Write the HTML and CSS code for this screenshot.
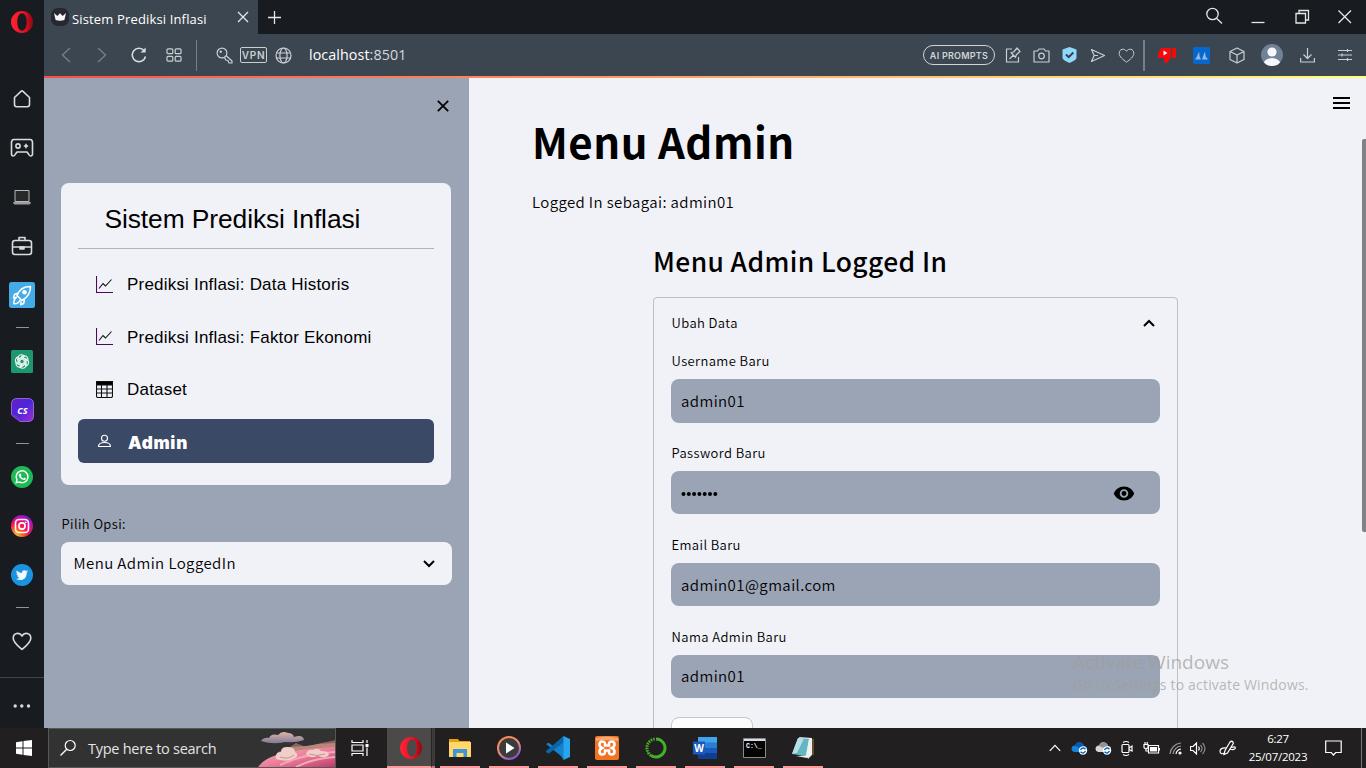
FILE: index.html
```html
<!DOCTYPE html>
<html lang="id">
<head>
<meta charset="utf-8">
<title>Sistem Prediksi Inflasi</title>
<link rel="stylesheet" href="styles.css">
</head>
<body>
<div class="screen">
  <nav class="rail">
    <div class="slot opera"><svg width="22" height="22" viewBox="0 0 22 22"><defs><linearGradient id="op" x1="0" x2="1"><stop offset="0" stop-color="#ff2434"/><stop offset=".55" stop-color="#f01225"/><stop offset="1" stop-color="#8e0714"/></linearGradient></defs><path fill="url(#op)" fill-rule="evenodd" d="M11 0a11 11 0 1 0 0 22a11 11 0 1 0 0-22zM11 2.3c2.900 0 4.700 3.700 4.700 8.700s-1.800 8.700-4.700 8.700s-4.700-3.700-4.700-8.700s1.800-8.700 4.700-8.700z"/></svg></div>
    <div class="slot"><svg class="ln" width="18" height="18" viewBox="0 0 18 18"><path d="M1.500 7.500L8 1.300q1-.8 2 0l6.500 6.200v7q0 2.200-2.200 2.200H3.700q-2.200 0-2.200-2.200z"/></svg></div>
    <div class="slot"><svg class="ln" width="24" height="20" viewBox="0 0 24 20"><path d="M4 1.500h16q2.500 0 2.500 3V16q0 2-2 2-1 0-2-2l-1.500-2H7l-1.500 2q-1 2-2 2-2 0-2-2V4.500q0-3 2.500-3z"/><circle cx="8" cy="8" r="2.100"/><path d="M16 5.800v4.400M13.800 8h4.400"/></svg></div>
    <div class="slot laptop"><svg width="18" height="15" viewBox="0 0 18 15"><path d="M2 .5h14v11H2z" fill="#292929" stroke="#b8b8b8"/><path d="M0 12h18l-1 2.500H1z" fill="#9d9d9d"/></svg></div>
    <div class="slot"><svg class="ln" width="22" height="20" viewBox="0 0 22 20"><rect x="1.500" y="4.500" width="19" height="14" rx="2.500"/><path d="M8 4V1.500h6V4M1.500 11h19"/><path d="M9 11h4v2H9z" fill="#d9dcde"/></svg></div>
    <div class="slot"><svg width="26" height="26" viewBox="0 0 26 26"><rect width="26" height="26" rx="2.500" fill="#45abe6"/><g fill="none" stroke="#fff" stroke-width="1.500" stroke-linejoin="round"><path d="M8 13.500C10 8 14 4.500 21.500 4.500c0 7-3 11-8.500 14zM9 11l-3.500 1.500L4.500 16l3-.7M15.500 17.500l-.8 4-3 1.300.5-3.500M8 15q-3.500 2-3.200 6.800Q9.500 22 11.200 18"/></g><circle cx="15.500" cy="10.300" r="2.300" fill="#fff"/></svg></div>
    <div class="dash"></div>
    <div class="slot tall"><svg width="22" height="23" viewBox="0 0 22 23"><rect width="22" height="23" rx="1.500" fill="#1d9770"/><g fill="none" stroke="#e8f5f0" stroke-width="1.150"><g id="petal"><path d="M7 14.500V8.300Q7.200 5 10.300 4.800Q12 4.800 13.200 6L8.800 8.500v5.200"/></g><use href="#petal" transform="rotate(60 11 11.500)"/><use href="#petal" transform="rotate(120 11 11.500)"/><use href="#petal" transform="rotate(180 11 11.500)"/><use href="#petal" transform="rotate(240 11 11.500)"/><use href="#petal" transform="rotate(300 11 11.500)"/></g></svg></div>
    <div class="slot up"><svg width="23" height="24" viewBox="0 0 23 24"><defs><linearGradient id="cs" x1="0" y1="0" x2="1" y2="1"><stop offset="0" stop-color="#6b1cc9"/><stop offset=".5" stop-color="#4b26d8"/><stop offset="1" stop-color="#a62bd6"/></linearGradient></defs><path d="M6 .5h11q5.500 0 5.500 5.500v12q0 5.500-5.500 5.500H9L.5 17V6Q.5.500 6 .5z" fill="url(#cs)" stroke="#8c65cf"/><path d="M.8 17Q7 15.500 8.500 23z" fill="#7b2bdc"/><text x="11.500" y="15.600" text-anchor="middle" class="cstext">CS</text></svg></div>
    <div class="dash"></div>
    <div class="slot tall"><svg width="22" height="22" viewBox="0 0 22 22"><circle cx="11" cy="11" r="11" fill="#1fb955"/><path d="M5.200 16.800l.8-3a5.900 5.900 0 1 1 2.200 2.100z" fill="none" stroke="#fff" stroke-width="1.400"/><path d="M8.600 7.800q1-.8 1.500.6l.3.900-.6.900q1 1.700 2.700 2.200l.8-.8 1.600.8q-.3 2-2.200 1.600-4.200-.9-5-4.700-.1-.900.900-1.500z" fill="#fff"/></svg></div>
    <div class="slot up"><svg width="22" height="22" viewBox="0 0 22 22"><defs><radialGradient id="ig" cx=".2" cy="1" r="1.100"><stop offset="0" stop-color="#ffd43b"/><stop offset=".3" stop-color="#fb6a23"/><stop offset=".55" stop-color="#f3145b"/><stop offset=".85" stop-color="#c20db0"/><stop offset="1" stop-color="#5f22d6"/></radialGradient></defs><circle cx="11" cy="11" r="11" fill="url(#ig)"/><g fill="none" stroke="#fff" stroke-width="1.600"><rect x="4.500" y="4.500" width="13" height="13" rx="3.500"/><circle cx="11" cy="11" r="3.100"/></g><circle cx="14.700" cy="7.300" r=".9" fill="#fff"/></svg></div>
    <div class="slot short"><svg width="22" height="22" viewBox="0 0 22 22"><circle cx="11" cy="11" r="11" fill="#1c93e0"/><path fill="#f3f8fb" d="M17 7.200q-.7.300-1.400.4.800-.5 1.100-1.300-.8.400-1.600.6A2.500 2.500 0 0 0 10.900 9Q7.700 8.900 5.700 6.500q-1 2 .8 3.400-.6 0-1.100-.3 0 1.900 2 2.500-.6.100-1.100 0 .5 1.600 2.300 1.700Q7.100 15.100 5 14.900 8 16.700 11.500 15.700q4.300-1.500 4.200-7.200.8-.6 1.300-1.300z"/></svg></div>
    <div class="dash"></div>
    <div class="slot tall"><svg class="ln" width="20" height="19" viewBox="0 0 20 19"><path d="M10 17.500C6 14 1.200 10.500 1.200 6.300 1.200 1 7.500-.3 10 4c2.500-4.300 8.800-3 8.800 2.300C18.800 10.500 14 14 10 17.500z"/></svg></div>
    <div class="more"><svg width="18" height="4" viewBox="0 0 18 4" fill="#d9dcde"><circle cx="2.200" cy="2" r="1.700"/><circle cx="8.800" cy="2" r="1.700"/><circle cx="15.500" cy="2" r="1.700"/></svg></div>
  </nav>

  <div class="window">
    <header class="tabs">
      <div class="tab">
        <svg width="18" height="18" viewBox="0 0 18 18"><rect width="18" height="18" rx="7" fill="#262730"/><path d="M3 5l3.300 3L9 5.200 11.700 8 15 5l-1.600 7q-4.400 1.500-8.800 0z" fill="#f5f5f5"/></svg>
        <span class="tab-title">Sistem Prediksi Inflasi</span>
        <svg class="tab-x" width="12" height="12" viewBox="0 0 12 12"><path d="M1 1l10 10M11 1L1 11"/></svg>
      </div>
      <svg class="plus" width="13" height="13" viewBox="0 0 13 13"><path d="M6.500 0v13M0 6.500h13"/></svg>
      <div class="winctl">
        <svg width="44" height="20" viewBox="0 0 44 20"><circle cx="20.500" cy="8" r="5.700"/><path d="M24.500 12.200L30 17.500"/></svg>
        <svg width="44" height="20" viewBox="0 0 44 20"><path d="M15.500 16.500h13"/></svg>
        <svg width="44" height="20" viewBox="0 0 44 20"><path d="M16 7.500h9.500V17H16zM19 7V4.500h9.500V14h-3"/></svg>
        <svg width="42" height="20" viewBox="0 0 42 20"><path d="M14.500 4.500L27 17M27 4.500L14.500 17"/></svg>
      </div>
    </header>
    <div class="toolbar">
      <div class="c nav-b"><svg class="dim" width="10" height="16" viewBox="0 0 10 16"><path d="M9 1L1.500 8 9 15"/></svg></div>
      <div class="c nav-b"><svg class="dim" width="10" height="16" viewBox="0 0 10 16"><path d="M1 1l7.500 7L1 15"/></svg></div>
      <div class="c nav-b reload"><svg class="ln" width="16" height="16" viewBox="0 0 16 16"><path d="M14.500 9.500a6.700 6.700 0 1 1-1.300-5.800"/><path d="M14.700.5v5H9.500z" fill="#d9dcde" stroke="none"/></svg></div>
      <div class="c nav-b"><svg class="ln thin" width="16" height="14" viewBox="0 0 16 14"><rect x="1" y=".8" width="5.800" height="4.900" rx="1"/><rect x="9.200" y=".8" width="5.800" height="4.900" rx="1"/><rect x="1" y="8.300" width="5.800" height="4.900" rx="1"/><rect x="9.200" y="8.300" width="5.800" height="4.900" rx="1"/></svg></div>
      <div class="sep"></div>
      <div class="c key"><svg class="ln thin" width="17" height="17" viewBox="0 0 17 17"><circle cx="6" cy="6" r="4.900"/><circle cx="4.700" cy="4.700" r=".6"/><path d="M10 8.500l6 5.500v2h-3l-1-2.500-2.300-.5-1-2.300"/></svg></div>
      <div class="vpn">VPN</div>
      <div class="c globe"><svg class="ln thin" width="17" height="17" viewBox="0 0 17 17"><circle cx="8.500" cy="8.500" r="7.500"/><ellipse cx="8.500" cy="8.500" rx="3.600" ry="7.500"/><path d="M1.500 6h14M1.500 11h14"/></svg></div>
      <div class="url">localhost<span>:8501</span></div>
      <div class="tools">
        <div class="prompts">AI PROMPTS</div>
        <div class="c w36"><svg class="ln thin" width="16" height="16" viewBox="0 0 16 16"><path d="M7 2H1.500v13h12V10M4.500 12l4-4M6 5.500l4.500 4.800.8-2.600L15 4.500 12 1 8.700 5z"/></svg></div>
        <div class="c w28"><svg class="ln thin" width="17" height="15" viewBox="0 0 17 15"><path d="M1 3h3.500L6 1h5l1.500 2H16v11H1z"/><circle cx="8.500" cy="8" r="2.800"/></svg></div>
        <div class="c w28"><svg width="15" height="16" viewBox="0 0 15 16"><path d="M7.500 0L14.500 2.500V11q0 2-7 5-7-3-7-5V2.500z" fill="#8fd8fb"/><path d="M4 7.500l2.700 2.700L11.300 5.500" fill="none" stroke="#34424e" stroke-width="2"/></svg></div>
        <div class="c w29"><svg class="ln thin" width="16" height="15" viewBox="0 0 16 15"><path d="M1.500 1.500l13 6-13 6 2.700-6zM4.200 7.500H8"/></svg></div>
        <div class="c w28"><svg class="ln thin" width="17" height="15" viewBox="0 0 20 18"><path d="M10 17C6 14 1.200 10.500 1.200 6.300 1.200 1 7.500-.3 10 4c2.500-4.300 8.800-3 8.800 2.300C18.800 10.500 14 14 10 17z"/></svg></div>
        <div class="sep wide"></div>
        <div class="c w43"><svg width="18" height="17" viewBox="0 0 18 17" fill="#f80808"><path d="M3 1h10v9l-4 6-3-.8.500-4.200H0V7z"/><path d="M14.200 1H18v10h-3.800z"/><path d="M5.500 3.500v5l4-2.500z" fill="#fff"/></svg></div>
        <div class="c w35"><svg width="17" height="17" viewBox="0 0 17 17"><rect width="17" height="17" rx="1.500" fill="#0668cc"/><path d="M2 12.500l2-3 2-5 .7 5 1.300 3zM9 12.500l1-3 2-5 .7 5 2.300 3z" fill="#94b7e6"/></svg></div>
        <div class="c w35"><svg class="ln thin" width="16" height="17" viewBox="0 0 16 17"><path d="M8 1l7 3.500v8L8 16l-7-3.500v-8zM1 4.500L8 8l7-3.500M8 8v8"/></svg></div>
        <div class="c w35"><svg width="22" height="22" viewBox="0 0 22 22"><clipPath id="av"><circle cx="11" cy="11" r="11"/></clipPath><g clip-path="url(#av)"><path d="M0 0h22v22H0z" fill="#718196"/><circle cx="11" cy="8" r="4.600" fill="#f3f6fa"/><ellipse cx="11" cy="20" rx="8.500" ry="6" fill="#f3f6fa"/></g></svg></div>
        <div class="c w37"><svg class="ln thin" width="15" height="15" viewBox="0 0 15 15"><path d="M7.500 0v10M3.500 6.500l4 4 4-4M.6 10v4h13.800v-4"/></svg></div>
        <div class="c w37"><svg class="ln thin" width="14" height="12" viewBox="0 0 14 12"><path d="M0 1.500h14M0 6h14M0 10.500h14M9.500 0v3M4 4.500v3M9.500 9v3"/></svg></div>
      </div>
    </div>
    <div class="accent"></div>

    <div class="page">
      <aside class="side">
        <svg class="side-x" width="12" height="12" viewBox="0 0 12 12"><path d="M.8.8l10.400 10.400M11.200.8L.8 11.200"/></svg>
        <div class="card">
          <div class="brand">Sistem Prediksi Inflasi</div>
          <div class="item"><svg width="17" height="17" viewBox="0 0 17 17"><path d="M.5 0v16.500H17" stroke="#4b0a56"/><path d="M3 12.500l4-5L9.500 10 15.500 3.500"/></svg>Prediksi Inflasi: Data Historis</div>
          <div class="item"><svg width="17" height="17" viewBox="0 0 17 17"><path d="M.5 0v16.500H17" stroke="#4b0a56"/><path d="M3 12.500l4-5L9.500 10 15.500 3.500"/></svg>Prediksi Inflasi: Faktor Ekonomi</div>
          <div class="item"><svg width="17" height="17" viewBox="0 0 17 17"><rect x=".5" y=".5" width="16" height="16" rx="1.500"/><path d="M.5.5h16V4H.5z" fill="#000"/><path d="M.5 8h16M.5 12h16M5.500 4v12.500M11 4v12.500"/></svg>Dataset</div>
          <div class="item active"><svg width="17" height="17" viewBox="0 0 17 17"><circle cx="8.500" cy="5.300" r="3"/><path d="M2.500 13.500q0-4 6-4t6 4z"/></svg><b>Admin</b></div>
        </div>
        <div class="label">Pilih Opsi:</div>
        <div class="select"><span>Menu Admin LoggedIn</span><svg width="12" height="8" viewBox="0 0 12 8"><path d="M1 1l5 5 5-5"/></svg></div>
      </aside>
      <main class="main">
        <div class="content">
          <h1>Menu Admin</h1>
          <p class="status">Logged In sebagai: admin01</p>
          <section class="col">
            <h2>Menu Admin Logged In</h2>
            <div class="expander">
              <div class="exp-head"><span>Ubah Data</span><svg width="12" height="8" viewBox="0 0 12 8"><path d="M1 7l5-5 5 5"/></svg></div>
              <div class="field"><div class="label">Username Baru</div><div class="input">admin01</div></div>
              <div class="field"><div class="label">Password Baru</div><div class="input"><svg class="dots" width="38" height="6" viewBox="0 0 38 6"><circle cx="2.500" cy="3" r="2"/><circle cx="7.800" cy="3" r="2"/><circle cx="13.100" cy="3" r="2"/><circle cx="18.400" cy="3" r="2"/><circle cx="23.700" cy="3" r="2"/><circle cx="29" cy="3" r="2"/><circle cx="34.300" cy="3" r="2"/></svg><svg class="eye" width="22" height="15" viewBox="0 0 22 15"><path fill-rule="evenodd" d="M11 .5C6 .5 2.500 3.500.8 7.500 2.500 11.500 6 14.500 11 14.500s8.500-3 10.200-7C19.500 3.500 16 .5 11 .5zM11 3.200a4.300 4.300 0 1 1 0 8.600a4.300 4.300 0 1 1 0-8.600z"/><circle cx="11" cy="7.500" r="2.400"/></svg></div></div>
              <div class="field"><div class="label">Email Baru</div><div class="input">admin01@gmail.com</div></div>
              <div class="field"><div class="label">Nama Admin Baru</div><div class="input">admin01</div></div>
              <div class="btn"></div>
            </div>
          </section>
        </div>
        <svg class="burger" width="17" height="12" viewBox="0 0 17 12"><path d="M0 0h17v2H0zM0 5h17v2H0zM0 10h17v2H0z"/></svg>
        <div class="thumb"></div>
        <div class="watermark"><div class="wm1">Activate Windows</div><div class="wm2">Go to Settings to activate Windows.</div></div>
      </main>
    </div>
  </div>

  <footer class="taskbar">
    <div class="start"><svg width="16" height="16" viewBox="0 0 16 16" fill="#fff"><path d="M0 2.200L6.500 1.300v6.200H0zM7.500 1.100L16 0v7.500H7.500zM0 8.500h6.500v6.200L0 13.800zM7.500 8.500H16V16l-8.500-1.100z"/></svg></div>
    <div class="search">
      <svg width="18" height="18" viewBox="0 0 18 18"><circle cx="11.200" cy="6.500" r="5" fill="none" stroke="#fff" stroke-width="1.200"/><path d="M7.700 10.200L1.500 16.500" stroke="#fff" stroke-width="1.300"/></svg>
      <span>Type here to search</span>
      <svg class="art" width="79" height="38" viewBox="0 0 79 38">
        <defs><linearGradient id="sea" x1="0" x2="1" y2="1"><stop offset="0" stop-color="#eab2b4"/><stop offset=".5" stop-color="#ef7f9c"/><stop offset="1" stop-color="#bb3c68"/></linearGradient><linearGradient id="cl" x2="0" y2="1"><stop offset="0" stop-color="#e0b6a9"/><stop offset="1" stop-color="#7f7997"/></linearGradient></defs>
        <path d="M5 12q3-4 8-3 2-5 9-3 4-5 10-2 5 0 6 4 9-3 10 3-8 3-19 2-12 3-24-1z" fill="url(#cl)"/>
        <path d="M22 23l12-5 6-4 10 4 15-4 15-3v27H16z" fill="#8d625e"/>
        <path d="M35 18l15-1 13-2 17-1v8H30z" fill="#b98779"/>
        <path d="M2 38C10 27 28 21 80 18v20z" fill="url(#sea)"/><path d="M24 36q26-12 56-13M40 38q18-9 40-10" fill="none" stroke="#f4a8b8" stroke-width="2"/>
        <path d="M20 27q0-4 5-4 0-5 6-5 8 0 8 5 5 3 0 6-7 4-14 2-7 0-5-4zM50 25q2-5 7-4 5-3 8 1 8 0 8 4-4 4-11 1-8 3-12-2z" fill="#f0cfca"/><path d="M24 28q8 3 14-2M53 25q8 3 16 0" fill="none" stroke="#c99296"/>
      </svg>
    </div>
    <div class="tview"><svg width="18" height="16" viewBox="0 0 18 16" fill="none" stroke="#fff" stroke-width="1.200"><path d="M1 0v2.500h11V0M1 5h11v6H1zM1 16v-2.500h11V16M16 0v3M16 7.500V16"/><path d="M14.500 4h3v3h-3z" fill="#fff" stroke="none"/></svg></div>
    <div class="app on"><svg width="22" height="22" viewBox="0 0 22 22"><path fill="url(#op)" fill-rule="evenodd" d="M11 0a11 11 0 1 0 0 22a11 11 0 1 0 0-22zM11.800 2.300c2.900 0 4.700 3.700 4.700 8.700s-1.800 8.700-4.700 8.700s-4.700-3.700-4.700-8.700s1.800-8.700 4.700-8.700z"/></svg></div>
    <div class="sliver"></div>
    <div class="app"><svg width="22" height="20" viewBox="0 0 22 20"><path d="M0 1h9l1.500 2H21v16H0z" fill="#e6a20c"/><path d="M0 4h22v15H0z" fill="#ffd76b"/><path d="M4 11h14v8h-3.500v-4h-7v4H4z" fill="#3c96dc"/></svg></div>
    <div class="app"><svg width="24" height="24" viewBox="0 0 24 24"><defs><linearGradient id="mp" x1="0" y1="0" x2=".6" y2="1"><stop offset="0" stop-color="#ff8b3d"/><stop offset=".6" stop-color="#e18b88"/><stop offset="1" stop-color="#8c55c8"/></linearGradient></defs><circle cx="12" cy="12" r="11" fill="#3b3b3b" stroke="url(#mp)" stroke-width="2"/><path d="M9 6.500v11l8.500-5.500z" fill="#fff"/></svg></div>
    <div class="app"><svg width="24" height="24" viewBox="0 0 24 24"><path d="M17.500 0L7 10 2.700 6.700 0 8l15 12 2.500 4 .5-4V6z" fill="#1681cc"/><path d="M0 16l2.700 1.800L18 6V0L0 15z" fill="#0866ac"/><path d="M17.500 0L24 3v18l-6.500 3z" fill="#27a5ee"/></svg></div>
    <div class="app"><svg width="24" height="24" viewBox="0 0 24 24"><rect width="24" height="24" rx="2" fill="#f27321"/><path d="M1 2q10-3 22 0v3Q12 3 1 5z" fill="#f9a86f"/><path d="M4.500 8.300c0-3.600 5.500-3.600 5.500-.6v1.800h4V7.700c0-3 5.500-3 5.500.6 0 2-1 3-2.500 3.700 1.500.7 2.500 1.700 2.500 3.700 0 3.600-5.500 3.600-5.500.6v-1.800h-4v1.800c0 3-5.500 3-5.500-.6 0-2 1-3 2.500-3.700-1.500-.7-2.500-1.700-2.500-3.700z" fill="none" stroke="#fff" stroke-width="2.600"/></svg></div>
    <div class="app"><svg width="22" height="22" viewBox="0 0 22 22" fill="none" stroke="#43b02a"><path d="M11 2a9 9 0 1 1-5 16.500" stroke-width="3"/><path d="M6 18.500A9 9 0 0 1 10 2" stroke-width="3" stroke-dasharray="1.500 1"/><path d="M3 16A9 9 0 0 1 8 2" stroke-dasharray="1 1.500"/></svg></div>
    <div class="app"><svg width="24" height="22" viewBox="0 0 24 22"><path d="M5 0h19v6H5z" fill="#41a5ee"/><path d="M5 5.500h19V11H5z" fill="#2b7cd3"/><path d="M5 11h19v5.500H5z" fill="#185abd"/><path d="M5 16h19v6H5z" fill="#103f91"/><path d="M0 4.500h12v13H0z" fill="#185abd"/><text x="6" y="14.600" text-anchor="middle" class="word">W</text></svg></div>
    <div class="app"><svg width="23" height="20" viewBox="0 0 23 20"><path d="M.5.5h22v19H.5z" fill="#050505" stroke="#8b8b8b"/><path d="M1 1h21v2H1z" fill="#d6dce7"/><text x="3" y="10" class="cmd">C:\_</text></svg></div>
    <div class="app"><svg width="24" height="24" viewBox="0 0 24 24"><path d="M8 1l13 1v17l-4 4z" fill="#d7e7e9"/><path d="M7 2l11 1-3 17-14-2z" fill="#66b5c4"/><path d="M7 2l6 .5L6 17l-5 .8z" fill="#b4e0e6"/><path d="M18 3l3-1v16l-5 4-11-2 10-.5z" fill="#eef1ef"/><path d="M22 3v16" stroke="#b17d2a"/></svg></div>
    <div class="tray">
      <div class="c t24"><svg class="w" width="12" height="8" viewBox="0 0 12 8"><path d="M.8 6.800L6 1.300l5.200 5.500"/></svg></div>
      <div class="c t24"><svg width="17" height="14" viewBox="0 0 17 14"><path d="M3.500 11Q.5 10.500.5 7.500 1 4.500 4 4.500 6 0 10 1.500q2.500 1 3 3.500 3 0 3 3v3z" fill="#1582dc"/><path d="M4 5q2-4.500 6-3.500 3 1 3 4L9 7z" fill="#0659ad"/><circle cx="12" cy="9.500" r="4.200" fill="#fff"/><path d="M9.500 9q2-3.500 5-.8M14.500 10q-2 3.500-5 .8" fill="none" stroke="#0869be" stroke-width="1.500"/></svg></div>
      <div class="c t24"><svg width="17" height="14" viewBox="0 0 17 14"><path d="M3.500 11Q.5 10.500.5 7.500 1 4.500 4 4.500 6 0 10 1.500q2.500 1 3 3.500 3 0 3 3v3z" fill="#d7d7d7"/><path d="M4 5q2-4.500 6-3.500 3 1 3 4L9 7z" fill="#929292"/><circle cx="12" cy="9.500" r="4.200" fill="#fff"/><path d="M9.500 9q2-3.500 5-.8M14.500 10q-2 3.500-5 .8" fill="none" stroke="#0869be" stroke-width="1.500"/></svg></div>
      <div class="c t24"><svg class="w" width="12" height="17" viewBox="0 0 12 17"><rect x="1" y="4.500" width="7" height="8" rx="1"/><path d="M8 8l3-2v5L8 9.500M2 2.500Q5 .5 8 2.500M2 14.500q3 2 6 0"/></svg></div>
      <div class="c t24"><svg class="w" width="17" height="13" viewBox="0 0 17 13"><path d="M5.500 3.500h10v7.500h-10zM16.500 6v2.500M1 2.500v3q0 1 2 1t2-1v-3zM2 0v2M4.200 0v2M3 6.500V9h2"/><path d="M7 5h7v4.500H7z" fill="#fff" stroke="none"/></svg></div>
      <div class="c t24"><svg class="w" width="13" height="13" viewBox="0 0 13 13"><g stroke="#969696"><path d="M1 12A12 12 0 0 1 12 1"/><path d="M4 12A9 9 0 0 1 12 4"/></g><path d="M7 12a6 6 0 0 1 5-5"/><circle cx="11" cy="11" r="1" fill="#fff"/></svg></div>
      <div class="c t22"><svg class="w" width="16" height="13" viewBox="0 0 16 13"><path d="M.5 4.500h2.500L6.500 1v11L3 8.500H.5zM8.500 4.500q1.500 2 0 4"/><path d="M10.500 3q3 3.500 0 7M12.500 1q5 5.500 0 11" stroke="#8a8a8a"/></svg></div>
      <div class="c t37"><svg class="w" width="17" height="16" viewBox="0 0 17 16"><path d="M5 14.500L6 10.500 11 2q1.500-1.500 3 0 .7 1-.3 2.500L8.500 13zM7 8Q1 7.500 1 11.500q.5 3.500 4.500 1.500M12.500 7.500q4-1.500 3.800.8-1.300 2.200-5.300.7"/></svg></div>
      <div class="clock"><span>6:27</span><span>25/07/2023</span></div>
      <div class="c t50"><svg class="w" width="17" height="16" viewBox="0 0 17 16"><path d="M.7 1h15.500v11.500h-5.500L8.500 15l-2.300-2.500H.7z"/></svg></div>
      <div class="peek"></div>
    </div>
  </footer>
</div>
</body>
</html>
```
FILE: styles.css
```css
* { box-sizing: border-box; }
body { margin: 0; overflow: hidden; }
svg { display: block; flex: none; }
.screen {
  width: 1366px; height: 768px;
  display: grid; grid-template: 728px 40px / 44px 1322px;
  font-family: "Open Sans", "Noto Sans", sans-serif;
}
.c { display: flex; align-items: center; justify-content: center; flex: none; }
.ln { fill: none; stroke: #d9dcde; stroke-width: 1.6; stroke-linejoin: round; }
.thin { stroke-width: 1.2; stroke: #c9ced3; }

.rail { background: #181c20; display: flex; flex-direction: column; }
.slot { height: 49px; display: flex; align-items: center; justify-content: center; flex: none; }
.slot.opera { height: 44px; margin-bottom: 30px; }
.slot.tall { height: 50px; }
.slot.short { height: 48px; }
.slot.up { padding-bottom: 1px; }
.slot.laptop { padding-top: 2px; }
.dash { height: 17px; flex: none; display: flex; align-items: center; justify-content: center; }
.dash::before { content: ""; width: 13px; height: 1px; background: #8b979f; }
.more { margin-top: 11px; flex: 1; border-top: 1px solid #3c4650; display: flex; justify-content: center; padding-top: 26px; }
.cstext { font: italic bold 9px "Open Sans", sans-serif; fill: #fff; }

.window { display: flex; flex-direction: column; height: 728px; overflow: hidden; }
.tabs { height: 34px; background: #181c20; display: flex; align-items: center; flex: none; }
.tab { width: 214px; height: 34px; background: #3c4650; display: flex; align-items: center; padding-left: 7px; }
.tab-title { font-size: 13px; letter-spacing: .15px; color: #fff; margin-left: 3px; width: 164px; white-space: nowrap; padding-top: 3px; }
.tab-x, .plus, .winctl svg { fill: none; stroke: #e4e6e8; stroke-width: 1.3; }
.tab-x { margin-left: 1px; }
.plus { margin-left: 10px; }
.winctl { margin-left: auto; display: flex; padding-bottom: 2px; }

.toolbar { height: 42px; background: #3c4650; display: flex; align-items: center; flex: none; padding-left: 4px; }
.nav-b { width: 36px; }
.reload { padding-left: 1px; }
.dim { fill: none; stroke: #78828a; stroke-width: 1.3; }
.sep { width: 1px; height: 31px; background: #788087; margin-left: 4px; }
.sep.wide { width: 2px; margin: 0 0 0 3px; }
.key { width: 43px; padding-left: 11px; }
.vpn { width: 27px; height: 16px; border: 1.3px solid #c9ced3; border-radius: 2px; font: 600 10px/14px Inter, sans-serif; letter-spacing: .7px; color: #c9ced3; text-align: center; }
.globe { width: 32px; }
.url { color: #fff; font-size: 14.3px; margin-left: 10px; letter-spacing: .08px; padding-bottom: 2px; }
.url span { color: #d5d9dc; }
.tools { margin-left: auto; display: flex; align-items: center; padding-right: 3px; }
.prompts { width: 72px; height: 20px; border: 1px solid #d0d4d8; border-radius: 10px; font: 600 9px/19px Inter, sans-serif; letter-spacing: .25px; color: #d0d4d8; text-align: center; white-space: nowrap; }
.w28 { width: 28px; } .w29 { width: 29px; } .w35 { width: 35px; } .w37 { width: 37px; }
.w36 { width: 36px; margin-right: -4px; }
.w43 { width: 43px; margin-right: -4px; }
.accent { height: 2px; flex: none; background: linear-gradient(90deg, #ff4b4b, #fffd80); }

.page { flex: 1; display: flex; min-height: 0; font-family: "Noto Sans CJK SC", sans-serif; font-weight: 350; color: #000; }
.side { width: 425px; background: #9ba4b5; padding: 22px 17px 0; flex: none; }
.side-x { margin: 0 3px 71px auto; fill: none; stroke: #000; stroke-width: 1.8; }
.card { width: 390px; height: 302px; background: #f1f2f8; border-radius: 8px; padding: 0 17px; font-family: "Liberation Sans", Arial, sans-serif; }
.brand { height: 66px; border-bottom: 1px solid #b3b4ba; margin-bottom: 14px; padding: 5px 0 0 26.5px; font-size: 26.4px; letter-spacing: -.1px; line-height: 62px; white-space: nowrap; }
.item { height: 44px; display: flex; align-items: center; padding-left: 18px; gap: 14px; font-size: 17px; letter-spacing: .2px; white-space: nowrap; margin-bottom: 8.5px; }
.item svg { fill: none; stroke: #111; stroke-width: 1.1; margin-bottom: 2px; }
.item:nth-child(4) { margin-bottom: 6.5px; }
.item.active { background: #3a4966; color: #fff; border-radius: 6px; padding-top: 3px; }
.item.active svg { stroke: #fff; }
.item b { font-family: Inter, sans-serif; font-weight: 900; font-size: 17.2px; letter-spacing: .7px; margin-left: 1px; }
.label { font-size: 13px; line-height: 20px; white-space: nowrap; letter-spacing: .4px; padding-left: .5px; }
.side .label { margin-top: 29px; margin-bottom: 8px; }
.select { width: 391px; height: 43px; border-radius: 8px; background: #f1f2f8; display: flex; align-items: center; justify-content: space-between; padding: 0 17px 0 12.5px; font-size: 15px; letter-spacing: .42px; }
.select span { padding-bottom: 2px; }
.select svg, .exp-head svg { fill: none; stroke: #000; stroke-width: 2; }

.main { flex: 1; background: #f1f2f8; position: relative; overflow: hidden; }
.content { padding: 33px 188px 0 63px; }
h1 { margin: 0; font-size: 42px; line-height: 60px; font-weight: 700; letter-spacing: .5px; }
.status { margin: 21px 0 0; font-size: 15px; line-height: 20px; letter-spacing: .38px; }
.col { margin-left: 121px; width: 525px; }
h2 { margin: 28px 0 16px; font-size: 26.4px; line-height: 41px; font-weight: 500; letter-spacing: .4px; white-space: nowrap; }
.expander { border: 1px solid #bfc0c6; border-radius: 4px; height: 600px; padding: 15px 17px 0; }
.exp-head { height: 20px; display: flex; align-items: center; justify-content: space-between; font-size: 13px; letter-spacing: .4px; padding-right: 5px; padding-left: .5px; margin-bottom: 18px; }
.exp-head span { padding-bottom: 2px; }
.field { height: 91.9px; }
.input { margin-top: 8px; height: 43.6px; border-radius: 8px; background: #9ba4b5; display: flex; align-items: center; padding: 0 25px 1px 10px; font-size: 15px; letter-spacing: .42px; }
.dots { margin-top: 3px; }
.eye { margin: 2px 0 0 auto; }
.btn { width: 82px; height: 44px; margin-top: -2px; border: 1px solid #c6c7cd; border-radius: 8px; background: #fcfcfd; }
.burger { position: absolute; right: 16px; top: 19px; }
.thumb { position: absolute; right: 0; top: 61px; width: 4px; height: 393px; background: #818287; border-radius: 2px 0 0 2px; }
.watermark { position: absolute; left: 604px; top: 571px; color: rgba(158,158,156,.72); font-family: "Open Sans", sans-serif; font-weight: 400; white-space: nowrap; }
.wm1 { font-size: 19px; line-height: 26px; }
.wm2 { font-size: 14px; letter-spacing: .18px; line-height: 20px; }

.taskbar { grid-column: 1 / 3; background: #211f1f; display: flex; }
.start { width: 48px; display: flex; align-items: center; justify-content: center; }
.search { width: 288px; border: 1px solid #575757; background: #323232; display: flex; align-items: center; color: #e4e4e4; font-size: 14.5px; padding-left: 10px; }
.search span { margin-left: 11px; width: 169px; white-space: nowrap; letter-spacing: -.27px; }
.tview { width: 48px; margin-right: 3px; display: flex; align-items: center; justify-content: center; }
.app { width: 40px; margin: 0 4px 0 5px; padding-top: 2px; border-bottom: 2px solid #ff989d; display: flex; align-items: center; justify-content: center; }
.app.on { width: 44px; margin: 0; padding-left: 3px; background: #4b4a49; }
.sliver { width: 4px; background: #3b3939; border-left: 1px solid #262424; border-bottom: 2px solid #c77a7e; }
.word { font: bold 10px "Open Sans", sans-serif; fill: #fff; }
.cmd { font: bold 6.5px "Liberation Mono", monospace; fill: #fff; }
.tray { margin-left: auto; display: flex; align-items: stretch; }
.w { fill: none; stroke: #fff; stroke-width: 1.2; }
.t22 { width: 22px; } .t24 { width: 24px; } .t37 { width: 37px; } .t50 { width: 50px; }
.clock { width: 62px; display: flex; flex-direction: column; align-items: center; color: #fff; font-size: 11.5px; line-height: 18px; padding: 2px 0 0 2px; letter-spacing: -.25px; }
.peek { width: 5px; border-left: 1px solid #77787a; margin-left: 3px; }
```
